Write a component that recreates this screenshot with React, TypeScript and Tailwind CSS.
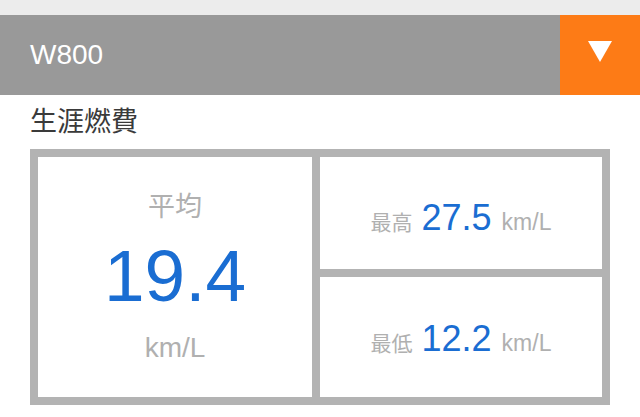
export default function App() {
  const font = { fontFamily: '"Liberation Sans", "Noto Sans CJK JP", sans-serif' };
  return (
    <div className="w-[640px] h-[417px] bg-white overflow-hidden" style={font}>
      <div className="h-[15px] bg-[#ececec]" />
      <header className="flex h-[80px]">
        <div className="flex flex-1 items-center bg-[#999999] pl-[30px] text-[28px] text-white">
          W800
        </div>
        <button className="flex w-[80px] items-start justify-center bg-[#fd7b16]">
          <svg width="80" height="80" viewBox="0 0 80 80">
            <polygon points="28,26 52,26 40,47" fill="#ffffff" />
          </svg>
        </button>
      </header>

      <h2 className="h-[54px] pl-[30px] pt-[11px] text-[27px] leading-[32px] font-normal text-[#3a3a3a]">
        生涯燃費
      </h2>

      <div className="ml-[30px] grid h-[256px] w-[580px] grid-cols-[274px_282px] grid-rows-[112px_120px] gap-[8px] bg-[#b3b3b3] p-[8px]">
        <div className="row-span-2 flex flex-col items-center bg-white pt-[35px]">
          <span className="text-[27px] leading-[30px] text-[#b0b0b0]">平均</span>
          <span className="mt-[14px] text-[73px] leading-[80px] text-[#1a6dd2]">19.4</span>
          <span className="mt-[17px] text-[28px] leading-[30px] text-[#b0b0b0]">km/L</span>
        </div>
        <div className="flex items-baseline justify-center bg-white pt-[41px]">
          <span className="text-[21px] text-[#b0b0b0]">最高</span>
          <span className="ml-[9px] text-[36px] leading-[40px] text-[#1a6dd2]">27.5</span>
          <span className="ml-[10px] text-[23px] text-[#b0b0b0]">km/L</span>
        </div>
        <div className="flex items-baseline justify-center bg-white pt-[42px]">
          <span className="text-[21px] text-[#b0b0b0]">最低</span>
          <span className="ml-[9px] text-[36px] leading-[40px] text-[#1a6dd2]">12.2</span>
          <span className="ml-[10px] text-[23px] text-[#b0b0b0]">km/L</span>
        </div>
      </div>
    </div>
  );
}
